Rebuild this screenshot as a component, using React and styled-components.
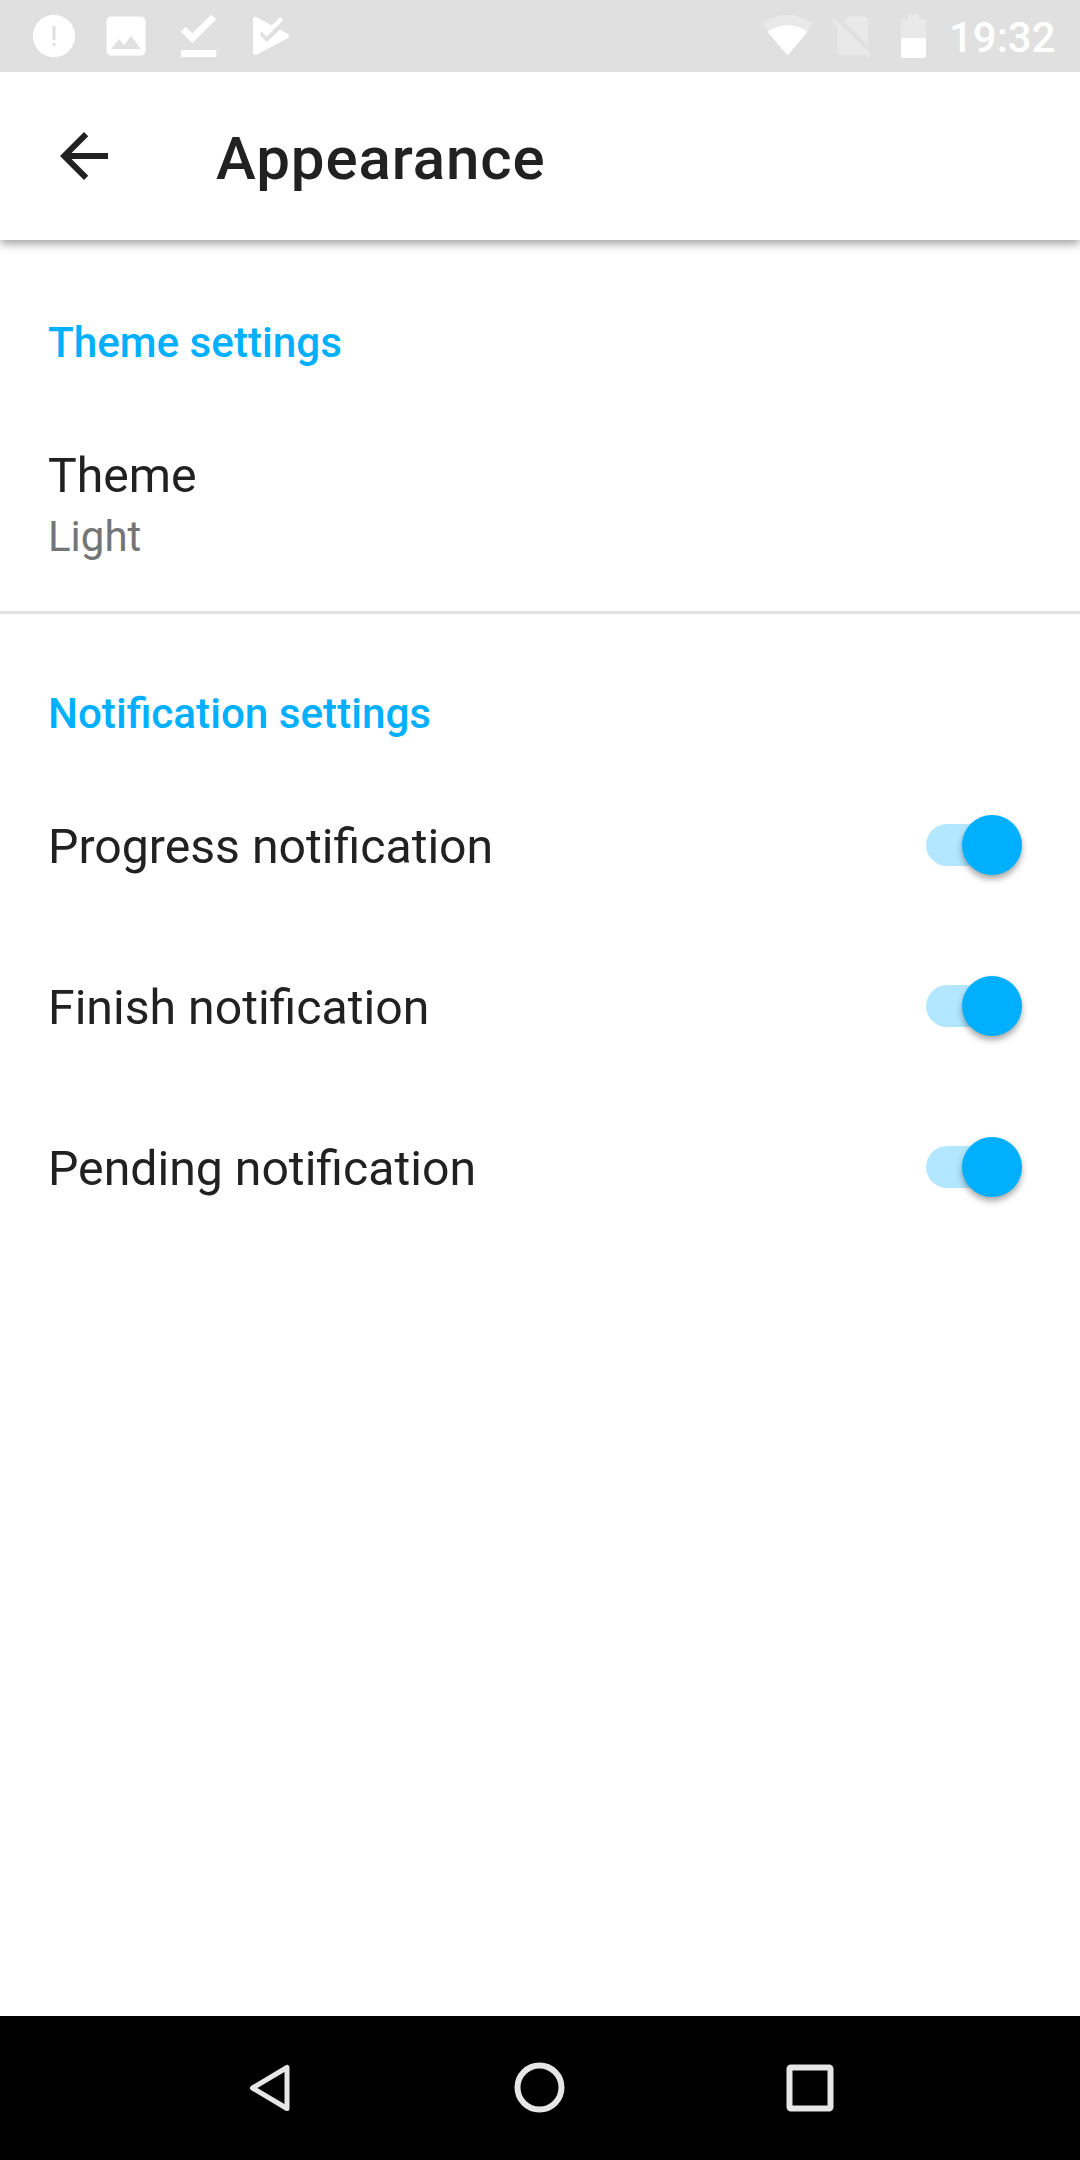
import React, { useState } from "react";
import styled, { createGlobalStyle } from "styled-components";

const GlobalStyle = createGlobalStyle`
  body {
    margin: 0;
    background-color: #fff;
    color: #212121;
    font-family: Roboto, "Liberation Sans", sans-serif;
  }
`;

const Screen = styled.div`
  width: 1080px;
  height: 2160px;
  display: flex;
  flex-direction: column;
  overflow: hidden;
`;

const StatusBar = styled.div`
  height: 72px;
  flex: none;
  padding: 0 24px 0 18px;
  box-sizing: border-box;
  display: flex;
  align-items: center;
  justify-content: space-between;
  background-color: #e0e0e0;
  z-index: 2;
`;

const StatusGroup = styled.div`
  display: flex;
  align-items: center;
`;

const StatusIcon = styled.svg`
  width: ${({ $width }) => $width || 72}px;
  height: 72px;
  display: block;
  fill: #fff;

  .dim {
    fill: #e9e9e9;
  }
  .slash {
    stroke: #e9e9e9;
    stroke-width: 4;
    stroke-linecap: round;
  }
  .cut {
    fill: #e0e0e0;
  }
`;

const Clock = styled.span`
  width: 107px;
  padding: 3px 0 0 1px;
  font-size: 42px;
  font-weight: 500;
  line-height: 49px;
  color: #fff;
`;

const Toolbar = styled.header`
  height: 168px;
  flex: none;
  padding-left: 48px;
  display: flex;
  align-items: center;
  background-color: #fff;
  box-shadow: 0 4px 9px rgba(0, 0, 0, 0.36);
  z-index: 1;

  h1 {
    margin: 0;
    padding-top: 5px;
    font-size: 60px;
    font-weight: 500;
    line-height: 70px;
    letter-spacing: 0.9px;
  }
`;

const BackButton = styled.button`
  width: 72px;
  height: 72px;
  margin-right: 96px;
  padding: 0;
  border: none;
  background: none;
  cursor: pointer;

  svg {
    width: 72px;
    height: 72px;
    display: block;
    fill: #212121;
  }
`;

const Content = styled.main`
  flex: 1;
`;

const Section = styled.section`
  padding-top: ${({ $first }) => ($first ? 78 : 75)}px;

  & + & {
    border-top: 3px solid #e0e0e0;
  }
`;

const SectionTitle = styled.h2`
  margin: 0 48px 25px;
  font-size: 42.2px;
  font-weight: 500;
  line-height: 50px;
  color: #00b0ff;
`;

const Row = styled.div`
  height: ${({ $tall }) => ($tall ? 218 : 161)}px;
  padding: 0 48px;
  display: flex;
  align-items: center;
  justify-content: space-between;
`;

const RowTitle = styled.div`
  padding-top: 5px;
  font-size: 48.2px;
  line-height: 56px;
`;

const Summary = styled.div`
  padding-top: 8px;
  font-size: 42px;
  line-height: 50px;
  color: #757575;
`;

const Track = styled.button`
  width: 95.5px;
  height: 42px;
  margin-right: 10.5px;
  padding: 0;
  border: none;
  border-radius: 21px;
  display: flex;
  align-items: center;
  justify-content: ${({ $on }) => ($on ? "flex-end" : "flex-start")};
  background-color: ${({ $on }) => ($on ? "#b3e7ff" : "#b2b2b2")};
  cursor: pointer;
`;

const Thumb = styled.span`
  width: 60px;
  height: 60px;
  flex: none;
  border-radius: 50%;
  background-color: ${({ $on }) => ($on ? "#00b0ff" : "#fafafa")};
  box-shadow: 0 4px 6px rgba(0, 0, 0, 0.34);
`;

const NavBar = styled.nav`
  height: 144px;
  flex: none;
  display: flex;
  justify-content: center;
  background-color: #000;
`;

const NavButton = styled.button`
  width: 270px;
  padding: 0;
  border: none;
  display: flex;
  align-items: center;
  justify-content: center;
  background: none;

  svg {
    width: 72px;
    height: 72px;
    fill: none;
    stroke: #e6e6e6;
    stroke-width: ${({ $stroke }) => $stroke || 6};
    stroke-linejoin: round;
  }
`;

const Switch = ({ on, onClick, label }) => (
  <Track $on={on} onClick={onClick} role="switch" aria-checked={on} aria-label={label}>
    <Thumb $on={on} />
  </Track>
);

const App = () => {
  const [settings, setSettings] = useState({
    "Progress notification": true,
    "Finish notification": true,
    "Pending notification": true,
  });

  const toggle = (name) => {
    setSettings({ ...settings, [name]: !settings[name] });
  };

  return (
    <Screen>
      <GlobalStyle />
      <StatusBar>
        <StatusGroup>
          <StatusIcon viewBox="0 0 72 72">
            <circle cx="36" cy="36" r="21.2" />
            <path className="cut" d="M34.5 26h3v14h-3zM34.5 43h3v3h-3z" />
          </StatusIcon>
          <StatusIcon viewBox="0 0 72 72">
            <rect x="16.5" y="16.5" width="39" height="39" rx="4.5" />
            <path className="cut" d="M21.3 49 29 39l4.7 6.3L41.3 36l9.4 13z" />
          </StatusIcon>
          <StatusIcon viewBox="0 0 72 72">
            <path d="m19 31.7 4.7-5 6.6 6.6 19-18.6 5 4.6L30.3 43zM19 50h35.3v7H19z" />
          </StatusIcon>
          <StatusIcon viewBox="0 0 72 72">
            <path d="M19 19.5c0-2.3 2-3.3 4-2.2l14.7 8.2 8.6-8.5 3.2 3.2-16.8 16.5-5-5-2.2 2.6 7.3 7.7L46 29.5l7.3 4.3c2.3 1.3 2.3 3 0 4.4l-30 16.4c-2.3 1.2-4.3.2-4.3-2.2z" />
          </StatusIcon>
        </StatusGroup>
        <StatusGroup>
          <StatusIcon viewBox="756 0 66 72" $width={66}>
            <path className="dim" d="M761.5 23.5a44 44 0 0 1 52 0L789 53.8q-1.5 1.8-3 0z" />
            <path d="M767.5 31.8a34 34 0 0 1 40 0L789 53.8q-1.5 1.8-3 0z" />
          </StatusIcon>
          <StatusIcon viewBox="822 0 66 72" $width={66}>
            <path className="dim" d="m843.3 21.5 5-5H864q4 0 4 4v25z" />
            <path className="dim" d="M837.3 24 868 54.7q-1 .3-2 .3h-24.7q-4 0-4-4z" />
            <path className="slash" d="m834.7 21.2 34 34" />
          </StatusIcon>
          <StatusIcon viewBox="888 0 60 72" $width={60}>
            <path className="dim" d="M908 14h11v5h5q2 0 2 2v17h-25V21q0-2 2-2h5z" />
            <path d="M901 38h25v18q0 2-2 2h-21q-2 0-2-2z" />
          </StatusIcon>
          <Clock>19:32</Clock>
        </StatusGroup>
      </StatusBar>

      <Toolbar>
        <BackButton aria-label="Back">
          <svg viewBox="0 0 24 24">
            <path d="M20 11H7.83l5.59-5.59L12 4l-8 8 8 8 1.41-1.41L7.83 13H20z" />
          </svg>
        </BackButton>
        <h1>Appearance</h1>
      </Toolbar>

      <Content>
        <Section $first>
          <SectionTitle>Theme settings</SectionTitle>
          <Row $tall>
            <div>
              <RowTitle>Theme</RowTitle>
              <Summary>Light</Summary>
            </div>
          </Row>
        </Section>
        <Section>
          <SectionTitle>Notification settings</SectionTitle>
          {Object.keys(settings).map((name) => (
            <Row key={name}>
              <RowTitle>{name}</RowTitle>
              <Switch label={name} on={settings[name]} onClick={() => toggle(name)} />
            </Row>
          ))}
        </Section>
      </Content>

      <NavBar>
        <NavButton aria-label="Back" $stroke={5}>
          <svg viewBox="0 0 72 72">
            <path d="M53 15.5v41L18.5 36z" />
          </svg>
        </NavButton>
        <NavButton aria-label="Home">
          <svg viewBox="0 0 72 72">
            <circle cx="35.5" cy="35.5" r="22" />
          </svg>
        </NavButton>
        <NavButton aria-label="Recents">
          <svg viewBox="0 0 72 72">
            <rect x="15.5" y="15.5" width="41" height="41" rx="1.5" />
          </svg>
        </NavButton>
      </NavBar>
    </Screen>
  );
};

export default App;
